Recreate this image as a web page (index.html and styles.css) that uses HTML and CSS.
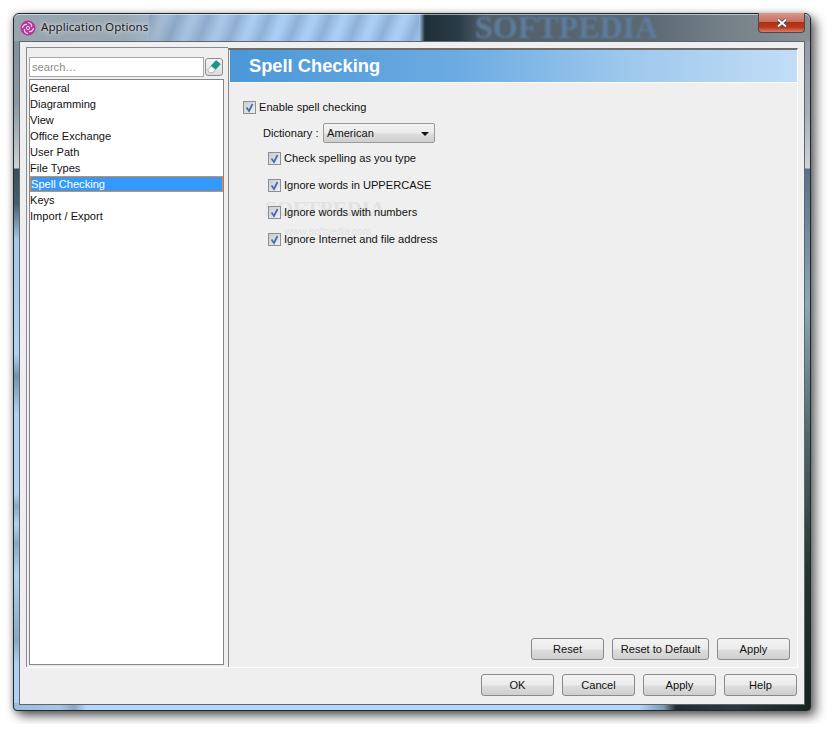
FILE: index.html
```html
<!DOCTYPE html>
<html lang="en">
<head>
  <meta charset="UTF-8"/>
  <title>Application Options</title>
  <link rel="stylesheet" href="styles.css">
</head>
<body>
  <div class="window">
    <div class="titlebar">
      <svg class="app-icon" width="16" height="16" viewBox="0 0 16 16">
        <circle cx="8" cy="8" r="7.5" fill="#b8379a"/>
        <circle cx="8" cy="8" r="1.6" fill="none" stroke="#f6d9ef" stroke-width="1"/>
        <path d="M8 2.500C11 3 12 5 11.500 7M13.500 8C13 11 11 12 9 11.500M8 13.500C5 13 4 11 4.500 9M2.500 8C3 5 5 4 7 4.500" fill="none" stroke="#f6d9ef" stroke-width="1.200"/>
      </svg>
      <span class="title-text">Application Options</span>
      <span class="title-mark">SOFTPEDIA</span>
      <div class="close-btn">
        <svg width="14" height="10" viewBox="0 0 14 10">
          <path d="M3 1.500L11 8.500M11 1.500L3 8.500" stroke="#3c4148" stroke-width="3.400"/>
          <path d="M3 1.500L11 8.500M11 1.500L3 8.500" stroke="#fff" stroke-width="2"/>
        </svg>
      </div>
    </div>
    <div class="client">
      <div class="panes">
        <div class="nav">
          <div class="search-row">
            <div class="search">search…</div>
            <div class="clear-btn">
              <svg width="16" height="16" viewBox="0 0 16 16">
                <path d="M10 1.500L14.500 5L9.500 10.500L5 7Z" fill="#0f9c86" stroke="#0b7d6c" stroke-width="0.500"/>
                <path d="M5 7L9.500 10.500L6.800 13.800L3.500 13.800L1.800 10.800Z" fill="#fbfbfb" stroke="#9a9a9a" stroke-width="0.700"/>
              </svg>
            </div>
          </div>
          <ul class="nav-list">
            <li>General</li>
            <li>Diagramming</li>
            <li>View</li>
            <li>Office Exchange</li>
            <li>User Path</li>
            <li>File Types</li>
            <li class="selected">Spell Checking</li>
            <li>Keys</li>
            <li>Import / Export</li>
          </ul>
        </div>
        <div class="main">
          <h1 class="main-head">Spell Checking</h1>
          <div class="content">
            <div class="ghost-mark">SOFTPEDIA</div>
            <div class="ghost-url">www.softpedia.com</div>
            <div class="check-row"><span class="check"></span>Enable spell checking</div>
            <div class="dict-row">
              <span class="dict-label">Dictionary :</span>
              <div class="select">American<span class="arrow"></span></div>
            </div>
            <div class="sub-checks">
              <div class="check-row"><span class="check"></span>Check spelling as you type</div>
              <div class="check-row"><span class="check"></span>Ignore words in UPPERCASE</div>
              <div class="check-row"><span class="check"></span>Ignore words with numbers</div>
              <div class="check-row"><span class="check"></span>Ignore Internet and file address</div>
            </div>
          </div>
          <div class="btn-row main-btns">
            <button class="btn">Reset</button>
            <button class="btn wide">Reset to Default</button>
            <button class="btn">Apply</button>
          </div>
        </div>
      </div>
      <div class="btn-row footer">
        <button class="btn">OK</button>
        <button class="btn">Cancel</button>
        <button class="btn">Apply</button>
        <button class="btn">Help</button>
      </div>
    </div>
  </div>
</body>
</html>
```

FILE: styles.css
```css
html, body {
  margin:0;
  background:#fff;
}
body {
  padding:13px;
  font-family:'Liberation Sans',Arial,sans-serif;
  font-size:11.1px;
  color:#111;
}
.window {
  position:relative;
  box-sizing:border-box;
  width:798px;
  height:698px;
  display:flex;
  flex-direction:column;
  border:1px solid #20282c;
  border-radius:6px 6px 4px 4px;
  box-shadow:5px 5px 11px rgba(0,0,0,0.6),-1px 1px 6px rgba(0,0,0,0.25);
  background:
    linear-gradient(90deg,#9cbcdc 0,#a8c6e4 45px,#8ea6c0 60px,#b3d6fa 72px,#b3d6fa 625px,#7d98ac 650px,#1f2d2f 662px,#2a3a3c 720px,#17251f 796px) 0 100%/100% 7px no-repeat,
    linear-gradient(180deg,#7f8f98 0,#8c999f 90px,#ccd3d3 154px,#3a5058 155px,#46606f 190px,#a5c8e8 225px,#b0d2f2 340px,#7493b3 362px,#b0d2f2 400px,#b0d2f2 480px,#8aa8c6 492px,#b0d2f2 510px,#8aa8c6 530px,#b0d2f2 560px,#8aa8c6 625px,#b0d2f2 650px) 0 0/6px 100% no-repeat,
    linear-gradient(180deg,#8a95a0 0,#aab0b8 100px,#d0d4d8 154px,#5a7088 155px,#8aa8b8 290px,#4f6a68 420px,#23352f 560px,#152220 690px) 100% 0/6px 100% no-repeat,
    #8a9aa8;
}
.titlebar {
  position:relative;
  height:27px;
  flex:none;
  display:flex;
  align-items:center;
  padding-left:6px;
  border-radius:5px 5px 0 0;
  box-shadow:inset 0 1px 0 rgba(255,255,255,0.55);
  background:
    repeating-linear-gradient(112deg,rgba(84,112,150,0.3) 0,transparent 12px,transparent 16px,rgba(84,112,150,0.3) 28px) 135px 0/270px 100% no-repeat,
    linear-gradient(90deg,#98a4ae 0,#9aa8b4 110px,#a4bfdc 160px,#aacdf3 250px,#aacdf3 400px,#a8c8ee 405px,#1e2e38 411px,#2a3c48 445px,#505f6a 470px,#5c6a74 640px,#727e86 700px,#8a9096 796px);
}
.app-icon { flex:none; }
.title-text {
  margin:0 0 2px 5px;
  font-family:'Noto Sans',Arial,sans-serif;
  font-size:11.6px;
  color:#1b1b1b;
  text-shadow:0 0 6px rgba(255,255,255,0.8),0 0 3px rgba(255,255,255,0.6);
}
.title-mark {
  position:absolute;
  left:461px;
  top:0;
  height:27px;
  line-height:27px;
  font-family:'Liberation Serif',serif;
  font-weight:700;
  font-size:32px;
  color:#5d7c9e;
  filter:blur(1.2px);
}
.close-btn {
  position:absolute;
  right:5px;
  top:-1px;
  box-sizing:border-box;
  width:47px;
  height:20px;
  display:flex;
  align-items:center;
  justify-content:center;
  border:1px solid #4a4a50;
  border-top:none;
  border-radius:0 0 4px 4px;
  background:linear-gradient(180deg,#d99a8e 0,#c96f60 45%,#b32f14 50%,#b8391e 75%,#d8806c 100%);
}
.client {
  position:relative;
  flex:1;
  margin:0 5px 5px 5px;
  min-height:0;
  display:flex;
  flex-direction:column;
  border:1px solid #5c6670;
  background:#efefef;
}
.panes {
  flex:1;
  min-height:0;
  display:flex;
  margin:5px 6px 0 6px;
  border-bottom:1px solid #fff;
}
.nav {
  box-sizing:border-box;
  width:202px;
  flex:none;
  display:flex;
  flex-direction:column;
  padding:9px 4px 2px 2px;
  border-left:1px solid #8a8a8a;
  border-top:1px solid #8a8a8a;
}
.search-row {
  display:flex;
  align-items:center;
  gap:1px;
  height:20px;
  margin-bottom:2px;
}
.search {
  box-sizing:border-box;
  width:175px;
  height:20px;
  line-height:18px;
  padding-left:2px;
  background:#fff;
  border:1px solid #a8a8a8;
  color:#8a8a8a;
}
.clear-btn {
  box-sizing:border-box;
  width:18px;
  height:18px;
  display:flex;
  align-items:center;
  justify-content:center;
  border:1px solid #8c8c8c;
  border-radius:3px;
  background:linear-gradient(180deg,#f4f4f4,#dcdcdc);
}
.nav-list {
  flex:1;
  list-style:none;
  margin:0;
  padding:0;
  background:#fff;
  border:1px solid #85858f;
}
.nav-list li {
  box-sizing:border-box;
  height:16px;
  line-height:16px;
  white-space:nowrap;
}
.nav-list .selected {
  background:#3399ff;
  color:#fff;
  border:1px solid #e58a32;
  line-height:14px;
}
.main {
  flex:1;
  min-width:0;
  display:flex;
  flex-direction:column;
  border-left:1px solid #8a8a8a;
  border-top:2px solid #6d6d6d;
  border-right:1px solid #fff;
  margin-top:1px;
}
.main-head {
  margin:0 0 0 1px;
  height:32px;
  line-height:32px;
  padding-left:19px;
  border-bottom:1px solid #fff;
  font-family:'Liberation Sans',Arial,sans-serif;
  font-size:18.3px;
  font-weight:700;
  color:#fff;
  background:linear-gradient(90deg,#4b97d8 0,#6cabe2 40%,#9dc8ec 70%,#c2ddf6 100%);
}
.content {
  position:relative;
  flex:1;
  padding:16px 0 0 14px;
}
.check-row {
  position:relative;
  display:flex;
  align-items:center;
  gap:3px;
  height:16px;
  white-space:nowrap;
}
.check {
  box-sizing:border-box;
  width:13px;
  height:13px;
  flex:none;
  border:1px solid #8e8f8f;
  background:
    url("data:image/svg+xml,%3Csvg xmlns='http://www.w3.org/2000/svg' width='11' height='11'%3E%3Cpath d='M2.500 5.500L5 9L8.500 2' fill='none' stroke='%234a6db0' stroke-width='1.800'/%3E%3C/svg%3E") center no-repeat,
    linear-gradient(135deg,#c8ccd2,#eef0f2);
}
.dict-row {
  position:relative;
  display:flex;
  align-items:center;
  margin:8px 0 7px 20px;
}
.dict-label {
  width:60px;
  flex:none;
}
.select {
  position:relative;
  box-sizing:border-box;
  width:112px;
  height:20px;
  line-height:18px;
  padding-left:3px;
  border:1px solid #9a9a9a;
  border-radius:2px;
  background:linear-gradient(180deg,#f2f2f2 0,#ebebeb 50%,#dddddd 55%,#cfcfcf 100%);
}
.arrow {
  position:absolute;
  right:5px;
  top:8px;
  border-left:4px solid transparent;
  border-right:4px solid transparent;
  border-top:4px solid #111;
}
.sub-checks {
  display:flex;
  flex-direction:column;
  gap:11px;
  margin-left:25px;
}
.ghost-mark {
  position:absolute;
  left:36px;
  top:114px;
  font-family:'Liberation Serif',serif;
  font-weight:700;
  font-size:21px;
  color:#e2e2e2;
}
.ghost-url {
  position:absolute;
  left:56px;
  top:143px;
  font-size:10px;
  color:#dfdfdf;
}
.btn-row {
  display:flex;
  justify-content:flex-end;
  gap:8px;
}
.main-btns {
  padding:0 7px 7px 0;
}
.footer {
  height:36px;
  flex:none;
  box-sizing:border-box;
  padding:6px 7px 0 0;
}
.btn {
  box-sizing:border-box;
  width:73px;
  height:22px;
  padding:0;
  font-family:inherit;
  font-size:inherit;
  color:#111;
  border:1px solid #8a8a8a;
  border-radius:3px;
  background:linear-gradient(180deg,#f3f3f3 0,#ebebeb 50%,#dddddd 55%,#cfcfcf 100%);
}
.btn.wide { width:97px; }
```
